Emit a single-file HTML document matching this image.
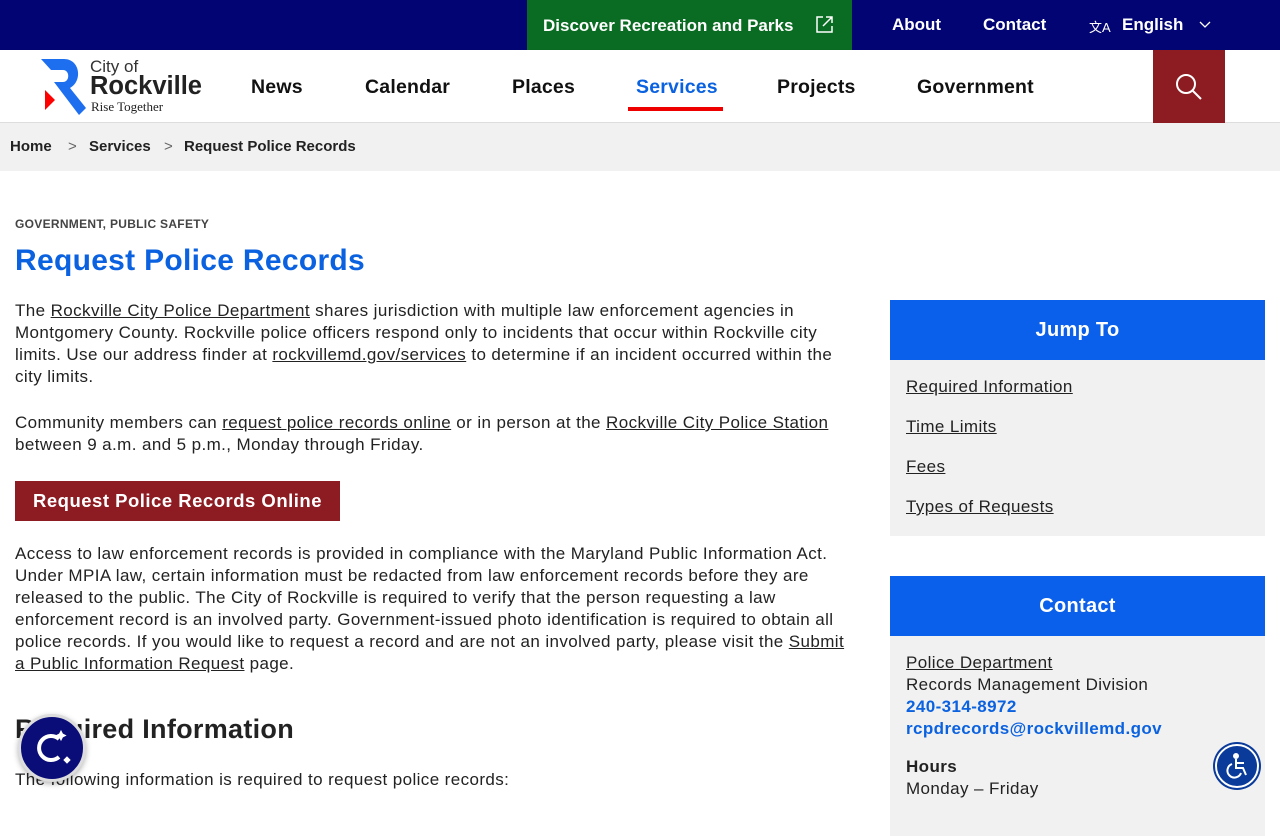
<!DOCTYPE html>
<html><head><meta charset="utf-8"><style>
*{margin:0;padding:0;box-sizing:border-box}
body{width:1280px;height:800px;overflow:hidden;font-family:"Liberation Sans",Arial,sans-serif;color:#222;background:#fff;position:relative}
a{color:#222}
.top{height:50px;background:#020473;position:relative;color:#fff;font-weight:bold;font-size:17px}
.green{position:absolute;left:527px;top:0;width:325px;height:50px;background:#0a6b22;padding:16px 0 0 16px}
.top span{position:absolute;top:15px}
.hdr{height:73px;position:relative;border-bottom:1px solid #ddd;box-shadow:0 2px 3px rgba(0,0,0,.08)}
.nav{position:absolute;top:26px;font-weight:bold;font-size:19.5px;letter-spacing:.2px;color:#111}
.search{position:absolute;left:1153px;top:0;width:72px;height:73px;background:#8d1b22}
.bc{height:48px;background:#f1f1f1;font-size:15px;font-weight:bold;position:relative}
.bc span{position:absolute;top:15px}
.main{position:absolute;left:15px;top:213px;width:840px;font-size:17px;letter-spacing:.4px;line-height:22px}
.main p{margin-bottom:24px}
.cat{font-size:12px;font-weight:bold;color:#444;letter-spacing:.3px}
h1{color:#0b62e0;font-size:30px;letter-spacing:.3px;margin:15px 0 28px}
.btn{display:inline-block;background:#8d1b22;color:#fff;font-weight:bold;font-size:18.5px;letter-spacing:.5px;padding:9px 18px;margin:1px 0 22px}
h2{font-size:27px;margin-top:43px;margin-bottom:29px;letter-spacing:.3px}
.side{position:absolute;left:890px;width:375px}
.sh{background:#0a60ea;color:#fff;font-weight:bold;font-size:20px;letter-spacing:.3px;text-align:center;height:60px;line-height:60px}
.sb{background:#f1f1f1;padding:16px 16px;font-size:17px;letter-spacing:.4px}
.sb a{display:block;line-height:22px;margin-bottom:18px}
</style></head><body>
<div class="top">
<div class="green">Discover Recreation and Parks
<svg style="position:absolute;left:288px;top:15px" width="19" height="19" viewBox="0 0 19 19" fill="none" stroke="#fff" stroke-width="1.5"><path d="M8 2H2v15h15v-6M11 2h6v6M17 2L8 11"/></svg></div>
<span style="left:892px">About</span><span style="left:983px">Contact</span>
<span style="left:1089px;font-size:13px;font-weight:normal;top:17px">文A</span>
<span style="left:1122px">English</span>
<svg style="position:absolute;left:1199px;top:21px" width="12" height="8" viewBox="0 0 12 8" fill="none" stroke="#fff" stroke-width="1.3"><path d="M1 1l5 5 5-5"/></svg>
</div>
<div class="hdr">
<svg style="position:absolute;left:40px;top:9px" width="46" height="56" viewBox="0 0 46 56"><path d="M1 0H24C40 0 43 22 30 29L46 49 39 56 14 23H23C30 23 30 11 23 11H11Z" fill="#1e6ff0"/><path d="M5 31L15 41 5 51Z" fill="#f00"/></svg>
<div style="position:absolute;left:90px;top:7px;font-size:17px;color:#333">City of</div>
<div style="position:absolute;left:90px;top:22px;font-size:25.5px;font-weight:bold;color:#222">Rockville</div>
<div style="position:absolute;left:91px;top:49px;font-size:13px;font-family:'Liberation Serif',serif;color:#222">Rise Together</div>
<div class="nav" style="left:251px">News</div>
<div class="nav" style="left:365px">Calendar</div>
<div class="nav" style="left:512px">Places</div>
<div class="nav" style="left:636px;color:#0b62e0">Services</div>
<div style="position:absolute;left:628px;top:57px;width:95px;height:4px;background:#e00"></div>
<div class="nav" style="left:777px">Projects</div>
<div class="nav" style="left:917px">Government</div>
<div class="search"><svg style="position:absolute;left:22px;top:23px" width="28" height="28" viewBox="0 0 28 28" fill="none" stroke="#fff" stroke-width="2"><circle cx="11" cy="11" r="9"/><path d="M17.5 17.5L26 26"/></svg></div>
</div>
<div class="bc"><span style="left:10px">Home</span><span style="left:68px;font-weight:normal;color:#666">&gt;</span><span style="left:89px">Services</span><span style="left:164px;font-weight:normal;color:#666">&gt;</span><span style="left:184px">Request Police Records</span></div>
<div class="main">
<div class="cat">GOVERNMENT, PUBLIC SAFETY</div>
<h1>Request Police Records</h1>
<p>The <a href="#">Rockville City Police Department</a> shares jurisdiction with multiple law enforcement agencies in Montgomery County. Rockville police officers respond only to incidents that occur within Rockville city limits. Use our address finder at <a href="#">rockvillemd.gov/services</a> to determine if an incident occurred within the city limits.</p>
<p>Community members can <a href="#">request police records online</a> or in person at the <a href="#">Rockville City Police Station</a> between 9 a.m. and 5 p.m., Monday through Friday.</p>
<div class="btn">Request Police Records Online</div>
<p>Access to law enforcement records is provided in compliance with the Maryland Public Information Act. Under MPIA law, certain information must be redacted from law enforcement records before they are released to the public. The City of Rockville is required to verify that the person requesting a law enforcement record is an involved party. Government-issued photo identification is required to obtain all police records. If you would like to request a record and are not an involved party, please visit the <a href="#">Submit a Public Information Request</a> page.</p>
<h2>Required Information</h2>
<p>The following information is required to request police records:</p>
</div>
<div class="side" style="top:300px"><div class="sh">Jump To</div><div class="sb" style="height:176px"><a href="#">Required Information</a><a href="#">Time Limits</a><a href="#">Fees</a><a href="#">Types of Requests</a></div></div>
<div class="side" style="top:576px"><div class="sh">Contact</div><div class="sb" style="height:200px;line-height:22px"><a href="#" style="margin:0">Police Department</a>Records Management Division<br><b style="color:#0b62e0">240-314-8972</b><br><b style="color:#0b62e0">rcpdrecords@rockvillemd.gov</b><div style="margin-top:16px"><b>Hours</b><br>Monday – Friday</div></div></div>
<div style="position:absolute;left:18px;top:714px;width:68px;height:68px;border-radius:50%;background:#0a0c78;border:3px solid #ddd;box-shadow:0 2px 6px rgba(0,0,0,.3)">
<svg width="62" height="62" viewBox="0 0 62 62" fill="none" stroke="#fff" stroke-width="4"><path d="M38 22A12 12 0 1 0 38 40"/><path d="M40 14l1.5 3 3 1.5-3 1.5-1.5 3-1.5-3-3-1.5 3-1.5z" fill="#fff" stroke-width="1"/><path d="M46 40l3 3-3 3-3-3z" fill="#fff" stroke-width="1"/></svg></div>
<div style="position:absolute;left:1215px;top:744px;width:44px;height:44px;border-radius:50%;background:#0a3a9a;border:2px solid #fff;box-shadow:0 0 0 2px #0a3a9a">
<svg width="40" height="40" viewBox="0 0 40 40" fill="none" stroke="#fff" stroke-width="2"><circle cx="19" cy="10" r="2" fill="#fff"/><path d="M19 13v9h7l3 7M15 18a7 7 0 1 0 9 9M20 17h7"/></svg></div>
</body></html>
